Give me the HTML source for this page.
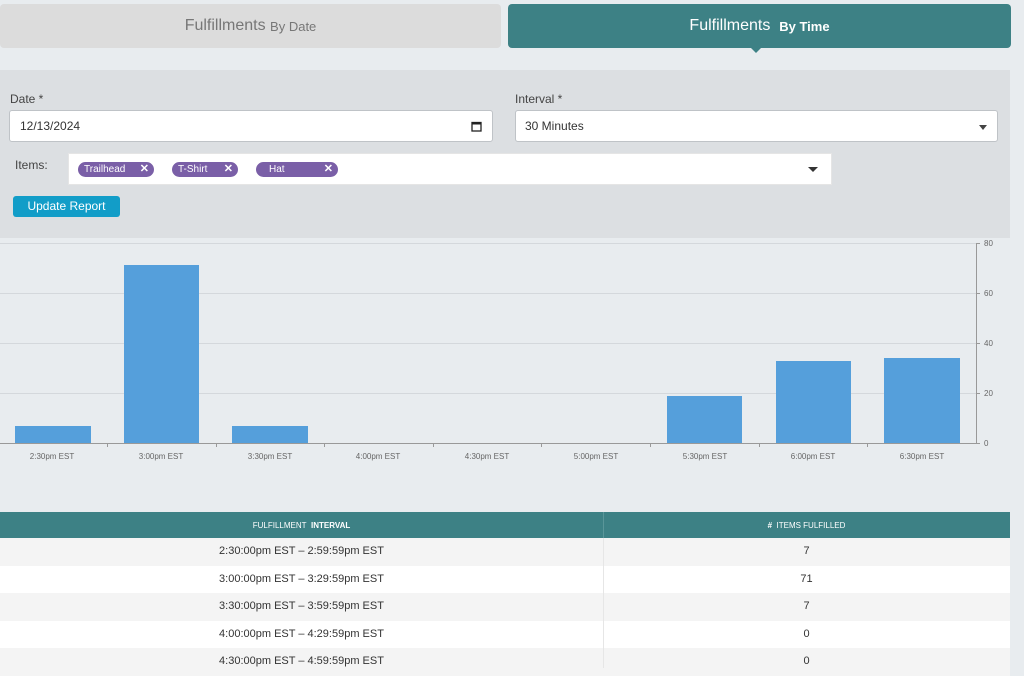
<!DOCTYPE html>
<html><head><style>
*{box-sizing:border-box;margin:0;padding:0}
body{width:1024px;height:667px;overflow:hidden;background:#e8ecef;font-family:"Liberation Sans",sans-serif;position:relative}
.a{position:absolute}
.tab{top:4px;height:44px;border-radius:4px;display:flex;align-items:center;justify-content:center;font-size:16px}
.inp{background:#fff;border:1px solid #bfc3c7;border-radius:3px;height:32px;font-size:12px;color:#333;display:flex;align-items:center;padding-left:10px}
.lab{font-size:12px;color:#444}
.chip{top:162px;height:15px;background:#7a5fa7;border-radius:8px;color:#fff;font-size:10px;line-height:15px;padding-left:6px}
.chip b{position:absolute;right:5px;top:0;font-size:11px}
.row{position:absolute;left:0;width:1010px;height:27.5px;font-size:11px;color:#333}
.row span{position:absolute;top:0;line-height:27px;text-align:center}
</style></head><body>
<div class="a tab" style="left:0;width:501px;background:#dcdcdc;color:#777">Fulfillments&nbsp;<span style="font-size:13px">By Date</span></div>
<div class="a tab" style="left:508px;width:503px;background:#3d8185;color:#fff">Fulfillments&nbsp;&nbsp;<span style="font-size:13px;font-weight:bold">By Time</span></div>
<div class="a" style="left:750px;top:47px;width:0;height:0;border-left:6px solid transparent;border-right:6px solid transparent;border-top:6px solid #3d8185"></div>
<div class="a" style="left:0;top:70px;width:1010px;height:168px;background:#dcdfe2"></div>
<div class="a lab" style="left:10px;top:92px">Date *</div>
<div class="a inp" style="left:9px;top:110px;width:484px">12/13/2024<svg class="a" style="right:10px;top:10px" width="11" height="11" viewBox="0 0 11 11"><rect x="1" y="1.5" width="9" height="8.5" fill="none" stroke="#222" stroke-width="1.3"/><rect x="1" y="1.5" width="9" height="2" fill="#222"/></svg></div>
<div class="a lab" style="left:515px;top:92px">Interval *</div>
<div class="a inp" style="left:515px;top:110px;width:483px;padding-left:9px">30 Minutes<div class="a" style="right:10px;top:14px;border-left:4px solid transparent;border-right:4px solid transparent;border-top:5px solid #444"></div></div>
<div class="a lab" style="left:15px;top:158px">Items:</div>
<div class="a" style="left:68px;top:153px;width:764px;height:32px;background:#fff;border:1px solid #e5e5e5"></div>
<div class="a" style="left:808px;top:167px;border-left:5px solid transparent;border-right:5px solid transparent;border-top:5px solid #333"></div>
<div class="a chip" style="left:78px;width:76px">Trailhead<b>✕</b></div>
<div class="a chip" style="left:172px;width:66px">T-Shirt<b>✕</b></div>
<div class="a chip" style="left:256px;width:82px;padding-left:13px">Hat<b>✕</b></div>
<div class="a" style="left:13px;top:196px;width:107px;height:21px;background:#129dc8;border-radius:3px;color:#fff;font-size:12px;line-height:21px;text-align:center">Update Report</div>
<svg class="a" style="left:0;top:238px" width="1024" height="230" viewBox="0 238 1024 230" font-family="Liberation Sans" font-size="8" fill="#666">
<g stroke="#d4d8dc" stroke-width="1"><line x1="0" y1="243.5" x2="976" y2="243.5"/><line x1="0" y1="293.5" x2="976" y2="293.5"/><line x1="0" y1="343.5" x2="976" y2="343.5"/><line x1="0" y1="393.5" x2="976" y2="393.5"/></g>
<g fill="#559fdb"><rect x="15" y="426" width="76" height="17.5"/><rect x="124" y="265" width="75" height="178.5"/><rect x="232" y="426" width="76" height="17.5"/><rect x="667" y="396" width="75" height="47.5"/><rect x="776" y="361" width="75" height="82.5"/><rect x="884" y="358" width="76" height="85.5"/></g>
<g stroke="#999" stroke-width="1"><line x1="0" y1="443.5" x2="976" y2="443.5"/><line x1="976.5" y1="243" x2="976.5" y2="444"/>
<line x1="976" y1="243.5" x2="980" y2="243.5"/><line x1="976" y1="293.5" x2="980" y2="293.5"/><line x1="976" y1="343.5" x2="980" y2="343.5"/><line x1="976" y1="393.5" x2="980" y2="393.5"/><line x1="976" y1="443.5" x2="980" y2="443.5"/>
<line x1="107.5" y1="443" x2="107.5" y2="447"/><line x1="216.5" y1="443" x2="216.5" y2="447"/><line x1="324.5" y1="443" x2="324.5" y2="447"/><line x1="433.5" y1="443" x2="433.5" y2="447"/><line x1="541.5" y1="443" x2="541.5" y2="447"/><line x1="650.5" y1="443" x2="650.5" y2="447"/><line x1="759.5" y1="443" x2="759.5" y2="447"/><line x1="867.5" y1="443" x2="867.5" y2="447"/></g>
<g text-anchor="start"><text x="984" y="246">80</text><text x="984" y="296">60</text><text x="984" y="346">40</text><text x="984" y="396">20</text><text x="984" y="446">0</text></g>
<g text-anchor="middle"><text x="52" y="459">2:30pm EST</text><text x="161" y="459">3:00pm EST</text><text x="270" y="459">3:30pm EST</text><text x="378" y="459">4:00pm EST</text><text x="487" y="459">4:30pm EST</text><text x="596" y="459">5:00pm EST</text><text x="705" y="459">5:30pm EST</text><text x="813" y="459">6:00pm EST</text><text x="922" y="459">6:30pm EST</text></g>
</svg>
<div class="a" style="left:0;top:512px;width:1010px;height:26px;background:#3d8185;color:#fff;font-size:8px">
<span class="a" style="left:0;width:603px;top:9px;text-align:center">FULFILLMENT&nbsp; <b>INTERVAL</b></span>
<span class="a" style="left:603px;width:407px;top:9px;text-align:center"><b>#</b>&nbsp; ITEMS FULFILLED</span>
<div class="a" style="left:603px;top:0;width:1px;height:26px;background:#5a9699"></div></div>
<div class="row" style="top:538px;background:#f4f4f4"><span style="left:0;width:603px">2:30:00pm EST – 2:59:59pm EST</span><span style="left:603px;width:407px">7</span></div>
<div class="row" style="top:565.5px;background:#fff"><span style="left:0;width:603px">3:00:00pm EST – 3:29:59pm EST</span><span style="left:603px;width:407px">71</span></div>
<div class="row" style="top:593px;background:#f4f4f4"><span style="left:0;width:603px">3:30:00pm EST – 3:59:59pm EST</span><span style="left:603px;width:407px">7</span></div>
<div class="row" style="top:620.5px;background:#fff"><span style="left:0;width:603px">4:00:00pm EST – 4:29:59pm EST</span><span style="left:603px;width:407px">0</span></div>
<div class="row" style="top:648px;background:#f4f4f4"><span style="left:0;width:603px">4:30:00pm EST – 4:59:59pm EST</span><span style="left:603px;width:407px">0</span></div>
<div class="a" style="left:603px;top:538px;width:1px;height:130px;background:#e6e6e6"></div>
</body></html>
